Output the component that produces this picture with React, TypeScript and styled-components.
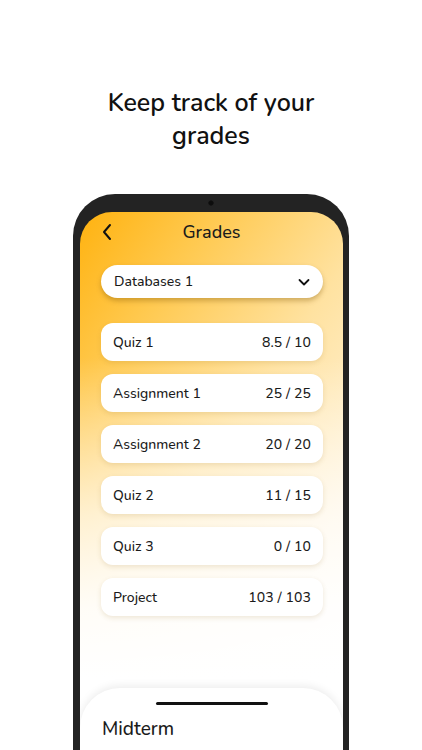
import React from "react";
import styled, { createGlobalStyle } from "styled-components";

const GlobalStyle = createGlobalStyle`
    html, body {
        margin: 0;
        padding: 0;
        background: #fff;
    }
    body {
        font-family: "Nunito", Lato, "Open Sans", sans-serif;
        color: #1b1b1b;
    }
`

const Page = styled.div`
    width: 422px;
    height: 750px;
    overflow: hidden;
    display: flex;
    flex-direction: column;
    align-items: center;
`

const Headline = styled.h1`
    margin: 87px 0 0 0;
    width: 270px;
    text-align: center;
    font-size: 25px;
    line-height: 33px;
    font-weight: 600;
    color: #111;
`

const Phone = styled.div`
    margin-top: 41px;
    width: 276px;
    height: 600px;
    flex-shrink: 0;
    box-sizing: border-box;
    background: #232323;
    border-radius: 42px 42px 0 0;
    padding: 18px 6px 0 7px;
    display: flex;
    flex-direction: column;
    position: relative;
`

const Camera = styled.div`
    position: absolute;
    top: 6px;
    left: 50%;
    width: 6px;
    height: 6px;
    margin-left: -3px;
    border-radius: 50%;
    background: #0d0d0d;
    box-shadow: inset 0 0 1px #444;
`

const Screen = styled.div`
    flex: 1;
    border-radius: 32px 32px 0 0;
    overflow: hidden;
    display: flex;
    flex-direction: column;
    background:
        linear-gradient(180deg, rgba(255,255,255,0) 0%, rgba(255,255,255,0) 25%, rgba(255,255,255,0.65) 52%, rgba(255,255,255,0.92) 68%, #fff 80%),
        linear-gradient(125deg, #ffb20f 0%, #ffc94f 20%, #ffe2a0 45%, #fff2d8 70%, #fff 100%);
`

const Header = styled.div`
    height: 40px;
    display: flex;
    align-items: center;
    position: relative;
    padding: 0 21px;
`

const BackButton = styled.button`
    border: none;
    background: none;
    padding: 0;
    display: flex;
    align-items: center;
    cursor: pointer;
`

const Title = styled.div`
    position: absolute;
    left: 0;
    right: 0;
    text-align: center;
    font-size: 18px;
    font-weight: 500;
    pointer-events: none;
`

const Content = styled.div`
    padding: 13px 20px 0 21px;
    display: flex;
    flex-direction: column;
`

const Dropdown = styled.div`
    height: 33px;
    background: #fff;
    border-radius: 17px;
    box-shadow: 0 3px 5px rgba(120, 80, 0, 0.35);
    display: flex;
    align-items: center;
    justify-content: space-between;
    padding: 0 12px 0 13px;
    font-size: 14px;
    font-weight: 500;
`

const GradeList = styled.div`
    margin-top: 25px;
    display: flex;
    flex-direction: column;
    gap: 13px;
`

const GradeCard = styled.div`
    height: 38px;
    background: #fff;
    border-radius: 12px;
    box-shadow: 0 2px 5px rgba(150, 110, 40, 0.16);
    display: flex;
    align-items: center;
    justify-content: space-between;
    padding: 0 12px;
    font-size: 14px;
    font-weight: 500;
`

const Score = styled.span`
    letter-spacing: 0.1px;
`

const Sheet = styled.div`
    margin-top: 72px;
    background: #fff;
    border-radius: 40px 40px 0 0;
    box-shadow: 0 -2px 8px rgba(0, 0, 0, 0.08);
    padding: 14px 22px 0 22px;
    flex: 1;
`

const Handle = styled.div`
    width: 112px;
    height: 3px;
    border-radius: 2px;
    background: #111;
    margin: 0 auto;
`

const SheetTitle = styled.div`
    margin-top: 11px;
    font-size: 19px;
    font-weight: 500;
`

const grades = [
    { name: "Quiz 1", score: "8.5 / 10" },
    { name: "Assignment 1", score: "25 / 25" },
    { name: "Assignment 2", score: "20 / 20" },
    { name: "Quiz 2", score: "11 / 15" },
    { name: "Quiz 3", score: "0 / 10" },
    { name: "Project", score: "103 / 103" },
];

export default function App() {
    return (
        <Page>
            <GlobalStyle />
            <Headline>Keep track of your grades</Headline>
            <Phone>
                <Camera />
                <Screen>
                    <Header>
                        <BackButton aria-label="Back">
                            <svg width="12" height="18" viewBox="0 0 12 18" fill="none">
                                <path d="M9 2 L3 9 L9 16" stroke="#111" strokeWidth="2" strokeLinecap="round" strokeLinejoin="round" />
                            </svg>
                        </BackButton>
                        <Title>Grades</Title>
                    </Header>
                    <Content>
                        <Dropdown>
                            <span>Databases 1</span>
                            <svg width="14" height="10" viewBox="0 0 14 10" fill="none">
                                <path d="M2.5 3 L7 7.5 L11.5 3" stroke="#111" strokeWidth="1.8" strokeLinecap="round" strokeLinejoin="round" />
                            </svg>
                        </Dropdown>
                        <GradeList>
                            {grades.map((g) => (
                                <GradeCard key={g.name}>
                                    <span>{g.name}</span>
                                    <Score>{g.score}</Score>
                                </GradeCard>
                            ))}
                        </GradeList>
                    </Content>
                    <Sheet>
                        <Handle />
                        <SheetTitle>Midterm</SheetTitle>
                    </Sheet>
                </Screen>
            </Phone>
        </Page>
    )
}
